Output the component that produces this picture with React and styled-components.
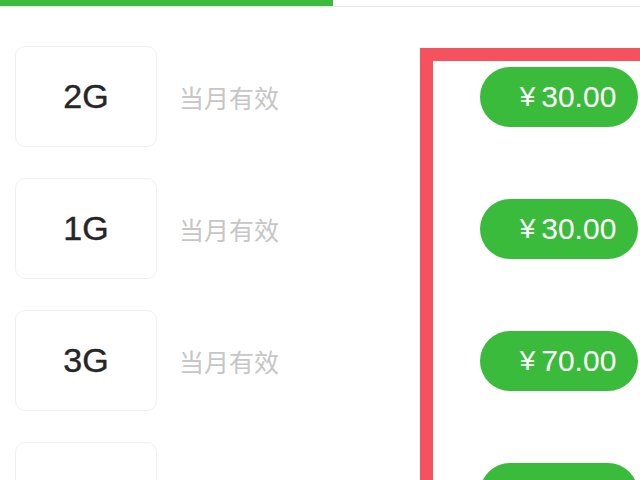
import React from "react";
import styled, { createGlobalStyle } from "styled-components";

const Global = createGlobalStyle`
  html, body { margin: 0; padding: 0; background: #fff; }
  body { width: 640px; height: 480px; overflow: hidden; font-family: "Liberation Sans", "Noto Sans CJK SC", sans-serif; }
`;

const Page = styled.div`
  position: relative;
  width: 640px;
  height: 480px;
  overflow: hidden;
  background: #fff;
`;

const TabBar = styled.div`
  display: flex;
  height: 7px;
  border-bottom: 1px solid #e4e4e4;
  box-sizing: border-box;
`;

const TabIndicator = styled.div`
  width: 333px;
  height: 6px;
  background: #3bbb3b;
`;

const List = styled.div`
  display: flex;
  flex-direction: column;
  gap: 31px;
  padding: 39px 0 0 15px;
`;

const Row = styled.div`
  display: flex;
  align-items: center;
  height: 101px;
`;

const SizeCard = styled.div`
  width: 142px;
  height: 101px;
  box-sizing: border-box;
  border: 1px solid #f0f0f0;
  border-radius: 10px;
  display: flex;
  align-items: center;
  justify-content: center;
  font-size: 34px;
  color: #262626;
  -webkit-text-stroke: 0.4px #262626;
  flex-shrink: 0;
`;

const Validity = styled.div`
  margin-left: 22px;
  font-family: "Noto Sans CJK SC", sans-serif;
  font-size: 25px;
  color: #c6c6c6;
  flex: 1;
`;

const PriceButton = styled.div`
  width: 158px;
  height: 60px;
  margin-right: 2px;
  border-radius: 30px;
  background: #3bbb3b;
  color: #fff;
  display: flex;
  align-items: center;
  justify-content: center;
  font-size: 30px;
  box-sizing: border-box;
  padding-left: 18px;
  flex-shrink: 0;
`;

const Yen = styled.span`
  font-size: 28px;
  margin-right: 6px;
`;

const Highlight = styled.div`
  position: absolute;
  left: 420px;
  top: 48px;
  width: 240px;
  height: 460px;
  border: 13px solid #f5515f;
  box-sizing: border-box;
  pointer-events: none;
`;

const plans = [
  { size: "2G", price: "30.00" },
  { size: "1G", price: "30.00" },
  { size: "3G", price: "70.00" },
  { size: "500M", price: "20.00" },
];

export default function App() {
  return (
    <Page>
      <Global />
      <TabBar>
        <TabIndicator />
      </TabBar>
      <List>
        {plans.map((p, i) => (
          <Row key={i}>
            <SizeCard>{p.size}</SizeCard>
            <Validity>当月有效</Validity>
            <PriceButton>
              <Yen>¥</Yen>
              {p.price}
            </PriceButton>
          </Row>
        ))}
      </List>
      <Highlight />
    </Page>
  );
}
